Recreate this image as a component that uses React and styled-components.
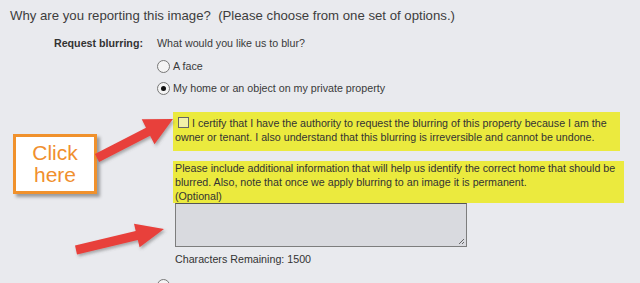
import React from 'react';
import styled, { createGlobalStyle } from 'styled-components';

const GlobalStyle = createGlobalStyle`
  html, body {
    margin: 0;
    padding: 0;
    background: #e9eaee;
  }
  body {
    font-family: "Liberation Sans", Arial, sans-serif;
    color: #3a3a3a;
  }
`;

const Page = styled.div`
  position: relative;
  width: 640px;
  height: 283px;
  overflow: hidden;
  background: #e9eaee;
  padding: 8px 0 0 10px;
  box-sizing: border-box;
`;

const Title = styled.div`
  font-size: 13.2px;
  line-height: 16px;
  color: #3d3d3d;
  white-space: pre;
`;

const Section = styled.div`
  display: grid;
  grid-template-columns: 133px 1fr;
  column-gap: 14px;
  margin-top: 11px;
  font-size: 10.7px;
`;

const Label = styled.div`
  text-align: right;
  font-weight: bold;
  color: #333;
  line-height: 16px;
`;

const Content = styled.div`
  display: flex;
  flex-direction: column;
`;

const Question = styled.div`
  line-height: 16px;
`;

const Option = styled.div`
  display: flex;
  align-items: center;
  gap: 3px;
  height: 22px;
  margin-top: ${(p) => p.$top || 0}px;
`;

const Radio = styled.span`
  width: 11px;
  height: 11px;
  border-radius: 50%;
  border: 1px solid #777;
  background: #f4f4f4;
  display: inline-flex;
  align-items: center;
  justify-content: center;
  flex-shrink: 0;
  &::after {
    content: '';
    width: 5px;
    height: 5px;
    border-radius: 50%;
    background: ${(p) => (p.$checked ? '#111' : 'transparent')};
  }
`;

const Highlight = styled.div`
  background: #ebea3e;
  margin-left: 16px;
  width: ${(p) => p.$width}px;
  height: ${(p) => p.$height}px;
  padding: ${(p) => p.$pad};
  box-sizing: border-box;
  line-height: 14px;
  color: #333;
  margin-top: ${(p) => p.$top}px;
`;

const Check = styled.span`
  display: inline-block;
  width: 9px;
  height: 9px;
  border: 1px solid #666;
  background: #f2f1a8;
  vertical-align: -1px;
  margin: 0 3px 0 3px;
`;

const TextArea = styled.div`
  margin-left: 18px;
  width: 292px;
  height: 44px;
  box-sizing: border-box;
  border: 1px solid #7d7d7d;
  border-top-color: #555;
  background: #d9dadf;
  position: relative;
`;

const Grip = styled.svg`
  position: absolute;
  right: 1px;
  bottom: 1px;
`;

const Remaining = styled.div`
  margin-left: 18px;
  margin-top: 5px;
  line-height: 14px;
  color: #333;
`;

const CalloutBox = styled.div`
  position: absolute;
  left: 13px;
  top: 134px;
  width: 84px;
  height: 60px;
  box-sizing: border-box;
  border: 3px solid #f0912c;
  background: #fff;
  box-shadow: 3px 3px 3px rgba(60, 60, 60, 0.45);
  color: #f08f2e;
  font-size: 21px;
  line-height: 22px;
  text-align: center;
  padding-top: 5px;
`;

const ArrowLayer = styled.svg`
  position: absolute;
  left: 0;
  top: 0;
  pointer-events: none;
`;

const Arrow = ({ x1, y1, x2, y2, head = 28, half = 13, shaft = 4 }) => {
  const dx = x2 - x1;
  const dy = y2 - y1;
  const len = Math.hypot(dx, dy);
  const ux = dx / len;
  const uy = dy / len;
  const nx = -uy;
  const ny = ux;
  const bx = x2 - ux * head;
  const by = y2 - uy * head;
  const pts = [
    [x1 + nx * shaft, y1 + ny * shaft],
    [bx + nx * shaft, by + ny * shaft],
    [bx + nx * half, by + ny * half],
    [x2, y2],
    [bx - nx * half, by - ny * half],
    [bx - nx * shaft, by - ny * shaft],
    [x1 - nx * shaft, y1 - ny * shaft],
  ]
    .map((p) => p.map((v) => v.toFixed(1)).join(','))
    .join(' ');
  return <polygon points={pts} fill="#e8403b" filter="url(#shadow)" />;
};

export default function App() {
  return (
    <>
      <GlobalStyle />
      <Page>
        <Title>Why are you reporting this image?  (Please choose from one set of options.)</Title>
        <Section>
          <Label>Request blurring:</Label>
          <Content>
            <Question>What would you like us to blur?</Question>
            <Option $top={4}>
              <Radio />
              <span>A face</span>
            </Option>
            <Option>
              <Radio $checked />
              <span>My home or an object on my private property</span>
            </Option>
            <Highlight $width={447} $height={39} $pad="4px 0 0 2px" $top={13}>
              <Check />I certify that I have the authority to request the blurring of this property because I am the
              owner or tenant. I also understand that this blurring is irreversible and cannot be undone.
            </Highlight>
            <Highlight $width={451} $height={42} $pad="0 0 0 2px" $top={10}>
              Please include additional information that will help us identify the correct home that should be
              blurred. Also, note that once we apply blurring to an image it is permanent.
              <br />
              (Optional)
            </Highlight>
            <TextArea>
              <Grip width="7" height="7" viewBox="0 0 7 7">
                <path d="M6 1 L1 6 M6 4 L4 6" stroke="#666" strokeWidth="1" />
              </Grip>
            </TextArea>
            <Remaining>Characters Remaining: 1500</Remaining>
            <Option $top={8}>
              <Radio />
            </Option>
          </Content>
        </Section>
        <CalloutBox>
          Click
          <br />
          here
        </CalloutBox>
        <ArrowLayer width="640" height="283">
          <defs>
            <filter id="shadow" x="-20%" y="-50%" width="140%" height="200%">
              <feDropShadow dx="1.5" dy="2" stdDeviation="1.5" floodColor="#555" floodOpacity="0.45" />
            </filter>
          </defs>
          <Arrow x1={97} y1={158} x2={173} y2={119} head={28} half={14} shaft={4.5} />
          <Arrow x1={76} y1={250} x2={164} y2={229} head={28} half={12} shaft={4.5} />
        </ArrowLayer>
      </Page>
    </>
  );
}
